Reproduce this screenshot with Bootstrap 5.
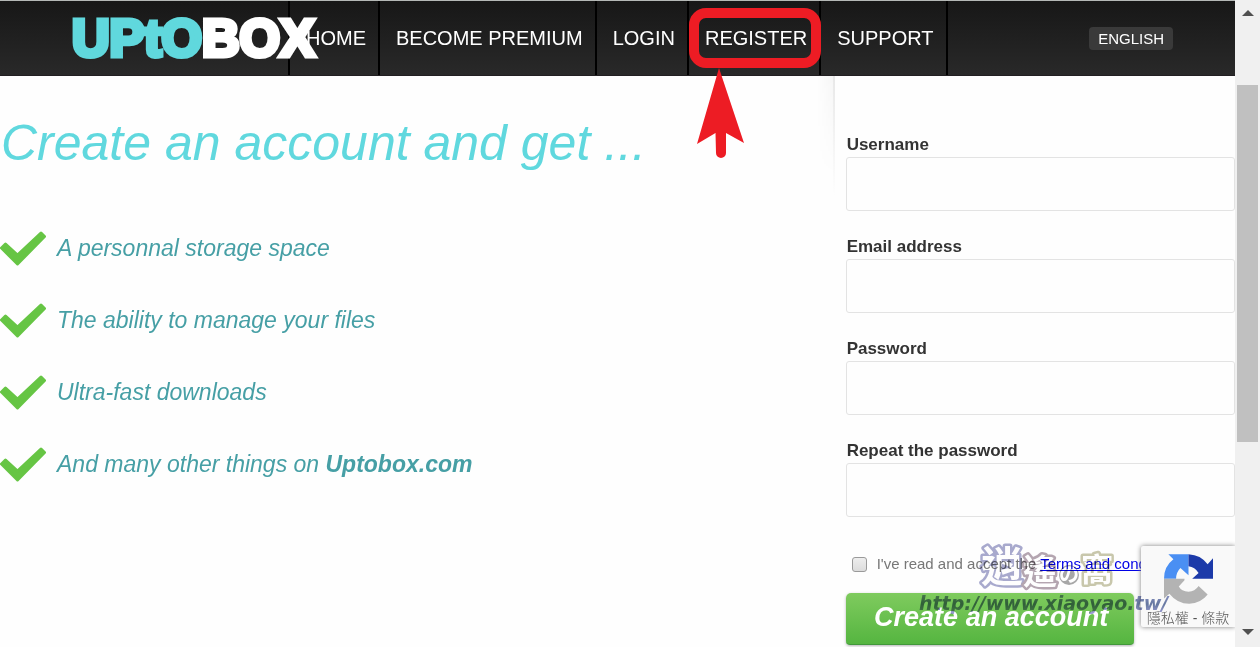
<!DOCTYPE html>
<html lang="en">
<head>
<meta charset="utf-8">
<meta name="viewport" content="width=device-width, initial-scale=1">
<title>Uptobox - Register</title>
<link href="https://cdn.jsdelivr.net/npm/bootstrap@5.3.0/dist/css/bootstrap.min.css" rel="stylesheet">
<style>
  body { font-family: "Liberation Sans", Arial, sans-serif; background: #fefefe; overflow: hidden; }
  .page-view { min-width: 0; }
  .top-bar { height: 76px; background: linear-gradient(#171717, #292929); border-top: 1px solid #b4b8b6; border-bottom: 1px solid #221f22; }
  .brand-slot { flex: 0 0 214px; width: 214px; z-index: 2; }
  .brand-name { font: 700 52px/72px "Liberation Sans", Arial, sans-serif; color: #fff; -webkit-text-stroke: 5px #fff; white-space: nowrap; text-decoration: none; }
  .brand-name .brand-up { color: #60d8dd; -webkit-text-stroke-color: #60d8dd; }
  .main-menu { margin-left: 26px; }
  .menu-item { border-left: 2px solid #000; }
  .menu-item:last-child { border-right: 2px solid #000; }
  .menu-item a { display: block; color: #fff; font-size: 20px; line-height: 74px; padding: 0 12px 0 16px; text-decoration: none; white-space: nowrap; }
  .lang-btn { background: #3a3a3a; color: #fff; font-size: 15px; line-height: 23px; border: 0; border-radius: 4px; padding: 0 9px; margin-right: 62px; }
  .callout-ring { position: absolute; inset: 7px -2px 7px 0; border: 10px solid #ed1c24; border-radius: 17px; pointer-events: none; }
  .callout-arrow { position: absolute; left: 8px; top: 67px; z-index: 3; }
  .pitch { padding-top: 37px; }
  .pitch h1 { font-size: 50px; line-height: 60px; font-style: italic; font-weight: 400; color: #60d8de; margin: 0 0 39px; padding-left: 1px; }
  .perks li { height: 72px; font-size: 23px; font-style: italic; color: #469fa5; gap: 11px; }
  .signup { flex: 0 0 32.5%; width: 32.5%; padding: 57px 0 0 12px; }
  .signup::before { content: ""; position: absolute; left: -1px; top: 0; width: 2px; height: 120px; background: linear-gradient(#e8e8e8, #fefefe); }
  .signup::after { content: ""; position: absolute; left: -17px; top: 0; width: 16px; height: 100px; background: linear-gradient(to left, rgba(0,0,0,.03), transparent); -webkit-mask-image: linear-gradient(#000, transparent); }
  .signup label.field-name { display: block; font-size: 17px; line-height: 24px; font-weight: 700; color: #333; padding-left: 1px; }
  .signup .form-control { height: 54px; border: 1px solid #e3e3e3; border-radius: 3px; background: #fefefe; margin-bottom: 24px; }
  .consent { font-size: 15px; line-height: 24px; color: #777; white-space: nowrap; padding: 11px 0 17px 6px; gap: 10px; }
  .consent input { appearance: none; width: 15px; height: 15px; margin: 0; border: 1px solid #9a9a9a; border-radius: 3px; background: linear-gradient(#eee, #dcdcdc); }
  .consent a { color: #0000e6; }
  .create-btn { width: 288px; height: 52px; border: 0; border-radius: 5px 5px 4px 4px; border-bottom: 1px solid #41983a; background: linear-gradient(#7fcb5e, #55b540); color: #fff; font-size: 27px; line-height: 46px; font-weight: 700; font-style: italic; padding: 0 0 4px 3px; box-shadow: 0 1px 3px rgba(0,0,0,.3); }
  .captcha { position: absolute; right: 0; bottom: 20px; width: 94px; height: 81px; background: #f9f9f9; box-shadow: 0 0 5px #808080; border-radius: 2px 0 0 2px; font: 300 14px/20px "Liberation Sans", "Noto Sans CJK TC", sans-serif; color: #555; z-index: 4; clip-path: inset(-6px 0 -6px -6px); padding-top: 8px; }
  .stamp { position: absolute; right: 54px; bottom: 27px; z-index: 5; pointer-events: none; mix-blend-mode: multiply; }
  .scroll-rail { flex: 0 0 25px; background: #f0f0f0; padding: 0 2px; }
  .scroll-thumb { height: 55.2%; background: #c0c0c0; }
</style>
</head>
<body>
<div class="d-flex vh-100">
  <div class="page-view position-relative flex-grow-1 overflow-hidden">
    <header class="top-bar d-flex align-items-center">
      <div class="brand-slot position-relative ms-5 ps-4"><a class="brand-name" href="#"><span class="brand-up">UPtO</span>BOX</a></div>
      <nav class="main-menu flex-grow-1">
        <ul class="d-flex list-unstyled mb-0">
          <li class="menu-item"><a href="#">HOME</a></li>
          <li class="menu-item"><a href="#">BECOME PREMIUM</a></li>
          <li class="menu-item"><a href="#">LOGIN</a></li>
          <li class="menu-item position-relative"><a href="#">REGISTER</a><span class="callout-ring"></span>
            <svg class="callout-arrow" width="48" height="91" viewBox="0 0 48 91" fill="#ed1c24"><path d="M22 0 47 75 29 65V85a5 5 0 0 1-10 0L18.500 65 0 76Z"/></svg></li>
          <li class="menu-item"><a href="#">SUPPORT</a></li>
        </ul>
      </nav>
      <button class="lang-btn" type="button">ENGLISH</button>
    </header>
    <main class="d-flex">
      <section class="pitch flex-grow-1">
        <h1>Create an account and get ...</h1>
        <ul class="perks list-unstyled mb-0">
          <li class="d-flex align-items-center"><svg width="46" height="35" viewBox="0 0 46 35" fill="#66c544" stroke="#66c544" stroke-width="3" stroke-linejoin="round"><path d="M1.500 17 5.500 13 17.500 24 41 2 44.500 5.500 17.500 33Z"/></svg><span>A personnal storage space</span></li>
          <li class="d-flex align-items-center"><svg width="46" height="35" viewBox="0 0 46 35" fill="#66c544" stroke="#66c544" stroke-width="3" stroke-linejoin="round"><path d="M1.500 17 5.500 13 17.500 24 41 2 44.500 5.500 17.500 33Z"/></svg><span>The ability to manage your files</span></li>
          <li class="d-flex align-items-center"><svg width="46" height="35" viewBox="0 0 46 35" fill="#66c544" stroke="#66c544" stroke-width="3" stroke-linejoin="round"><path d="M1.500 17 5.500 13 17.500 24 41 2 44.500 5.500 17.500 33Z"/></svg><span>Ultra-fast downloads</span></li>
          <li class="d-flex align-items-center"><svg width="46" height="35" viewBox="0 0 46 35" fill="#66c544" stroke="#66c544" stroke-width="3" stroke-linejoin="round"><path d="M1.500 17 5.500 13 17.500 24 41 2 44.500 5.500 17.500 33Z"/></svg><span>And many other things on <strong>Uptobox.com</strong></span></li>
        </ul>
      </section>
      <form class="signup position-relative">
        <label class="field-name" for="user">Username</label>
        <input class="form-control" id="user" type="text">
        <label class="field-name" for="mail">Email address</label>
        <input class="form-control" id="mail" type="email">
        <label class="field-name" for="pass">Password</label>
        <input class="form-control" id="pass" type="password">
        <label class="field-name" for="again">Repeat the password</label>
        <input class="form-control" id="again" type="password">
        <div class="consent d-flex align-items-center">
          <input type="checkbox" id="agree">
          <label for="agree">I've read and accept the <a href="#">Terms and conditions</a></label>
        </div>
        <button class="create-btn" type="button">Create an account</button>
      </form>
    </main>
    <aside class="captcha text-center">
      <svg class="d-block mx-auto mb-1" width="49" height="50" viewBox="0 0 146 148"><path fill="#4a8ff3" d="M73 0H13L28 15Q0 36 0 73H36Q36 54 49 41L73 63Z"/><path fill="#1c3aa9" d="M73 0V36Q92 38 103 56L84 73H146V12L130 30Q110 2 73 0Z"/><path fill="#b3b3b3" d="M0 73V132L16 118Q40 148 75 148 110 146 130 120L103 95Q92 112 73 112 52 110 44 96L61 78V73Z"/></svg>
      <span>隱私權 - 條款</span>
    </aside>
    <svg class="stamp" width="264" height="78" viewBox="0 0 264 78">
      <defs><linearGradient id="ink" x1="0" y1="0" x2="0" y2="1"><stop offset="0" stop-color="#8589c9"/><stop offset=".55" stop-color="#4c6292"/><stop offset="1" stop-color="#9292d5"/></linearGradient></defs>
      <g font-family="Noto Sans CJK TC, sans-serif" font-weight="700" fill="#fff" stroke-width="5" stroke-linejoin="round" paint-order="stroke" opacity=".85">
        <text x="64" y="40" font-size="42" stroke="#9a9cc6">逍</text>
        <text x="106" y="42" font-size="34" stroke="#a897a4">遙</text>
        <circle cx="152" cy="33" r="10" fill="#999"/><text x="142" y="40" font-size="20" stroke-width="1" stroke="#999">の</text>
        <text x="164" y="39" font-size="32" stroke="#c0bf9f">窩</text>
      </g>
      <text x="2" y="68" font-family="DejaVu Sans, sans-serif" font-weight="700" font-style="italic" font-size="19" fill="url(#ink)" opacity=".85">http://www.xiaoyao.tw/</text>
    </svg>
  </div>
  <div class="scroll-rail d-flex flex-column" aria-hidden="true">
    <svg class="mx-auto flex-shrink-0" width="12" height="85" viewBox="0 0 12 85"><path fill="#505050" d="M0 16 6 10 12 16Z"/></svg>
    <div class="scroll-thumb"></div>
    <svg class="mx-auto mt-auto flex-shrink-0" width="12" height="18" viewBox="0 0 12 18"><path fill="#505050" d="M0 0H12L6 6Z"/></svg>
  </div>
</div>
<script src="https://cdn.jsdelivr.net/npm/bootstrap@5.3.0/dist/js/bootstrap.bundle.min.js"></script>
</body>
</html>
